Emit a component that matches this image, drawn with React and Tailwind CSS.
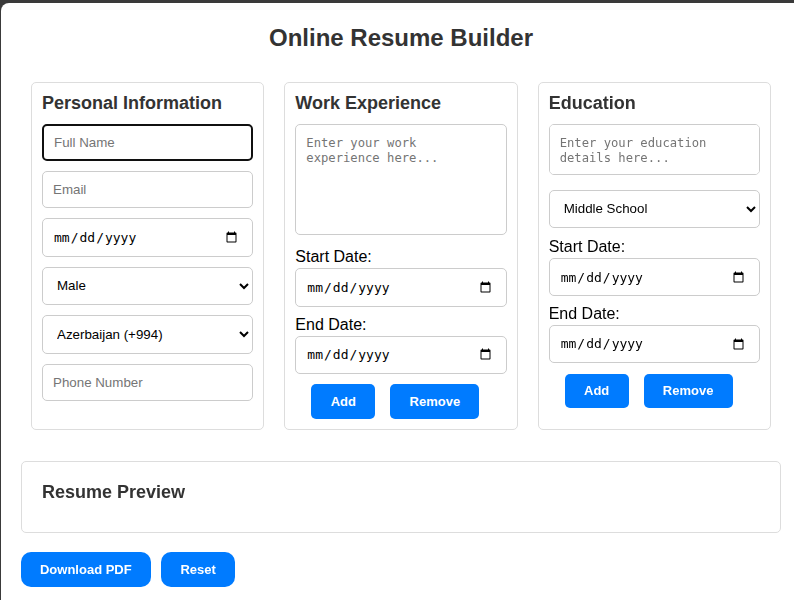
import React from "react";

const font = { fontFamily: "'Liberation Sans', Arial, sans-serif" };

function TextInput({ placeholder, focused }) {
  return (
    <input
      type="text"
      placeholder={placeholder}
      className={
        "block w-full h-[37.3px] px-[10px] text-[13.33px] leading-[15.3px] rounded-[5px] bg-white text-black placeholder:text-[#757575] outline-none mb-[10px] " +
        (focused ? "border-2 border-[#101010] px-[9px]" : "border border-[#cccccc]")
      }
    />
  );
}

function DateInput({ mb = "mb-[10px]" }) {
  return (
    <input
      type="date"
      className={
        "block w-full h-[38.4px] pl-[10px] pr-[12px] border border-[#cccccc] rounded-[5px] bg-white text-black text-[13px] font-['DejaVu_Sans_Mono',monospace] outline-none " +
        mb
      }
    />
  );
}

function Select({ children, value }) {
  return (
    <select
      defaultValue={value}
      className="block w-full h-[38.5px] px-[10px] border border-[#cccccc] rounded-[5px] bg-white text-black text-[13.33px] outline-none mb-[10px]"
    >
      {children}
    </select>
  );
}

function Label({ children }) {
  return (
    <div className="text-[16px] leading-[18.4px] text-black mb-[1.5px]">{children}</div>
  );
}

function SmallButtons() {
  return (
    <div className="flex gap-[15px] pl-[16px]">
      <button className="w-[64px] h-[34.7px] rounded-[5px] bg-[#007bff] text-white text-[13px] font-bold">
        Add
      </button>
      <button className="w-[89px] h-[34.7px] rounded-[5px] bg-[#007bff] text-white text-[13px] font-bold">
        Remove
      </button>
    </div>
  );
}

function Card({ title, children }) {
  return (
    <div className="flex-1 mx-[10px] border border-[#dddddd] rounded-[5px] p-[10px]">
      <h3 className="text-[18px] leading-[20.7px] font-bold text-[#333333] mb-[10px]">{title}</h3>
      {children}
    </div>
  );
}

export default function App() {
  return (
    <div className="w-[794px] h-[600px] overflow-hidden bg-[#3a3a3a]" style={font}>
      <div className="ml-[1px] mt-[3px] w-[800px] h-[620px] bg-white rounded-[8px] px-[20px] pt-[21px]">
        <h1 className="text-center text-[24px] leading-[27.6px] font-bold text-[#333333] mb-[30.4px]">
          Online Resume Builder
        </h1>
        <div className="flex items-stretch">
          <Card title="Personal Information">
            <TextInput placeholder="Full Name" focused />
            <TextInput placeholder="Email" />
            <DateInput />
            <Select value="Male">
              <option>Male</option>
              <option>Female</option>
            </Select>
            <Select value="az">
              <option value="az">Azerbaijan (+994)</option>
            </Select>
            <TextInput placeholder="Phone Number" />
          </Card>
          <Card title="Work Experience">
            <textarea
              placeholder="Enter your work experience here..."
              className="block w-full h-[111.3px] px-[10px] pt-[11px] pb-[10px] border border-[#cccccc] rounded-[5px] bg-white text-[12.2px] leading-[15px] font-['DejaVu_Sans_Mono',monospace] placeholder:text-[#757575] outline-none resize-none mb-[13.5px]"
            />
            <Label>Start Date:</Label>
            <DateInput mb="mb-[9px]" />
            <Label>End Date:</Label>
            <DateInput mb="mb-[10px]" />
            <SmallButtons />
          </Card>
          <Card title="Education">
            <textarea
              placeholder="Enter your education details here..."
              className="block w-full h-[51px] px-[10px] pt-[11px] pb-[10px] border border-[#cccccc] rounded-[5px] bg-white text-[12.2px] leading-[15px] font-['DejaVu_Sans_Mono',monospace] placeholder:text-[#757575] outline-none resize-none mb-[15px]"
            />
            <Select value="ms">
              <option value="hs">High School</option>
              <option value="ms">Middle School</option>
            </Select>
            <Label>Start Date:</Label>
            <DateInput mb="mb-[8.5px]" />
            <Label>End Date:</Label>
            <DateInput mb="mb-[10.3px]" />
            <SmallButtons />
          </Card>
        </div>
        <div className="mt-[31px] w-[760px] border border-[#dddddd] rounded-[5px] px-[20px] pt-[20px] pb-[20px]">
          <h3 className="text-[18px] leading-[20.7px] font-bold text-[#333333] mb-[10px]">Resume Preview</h3>
        </div>
        <div className="flex gap-[10.5px] mt-[19px]">
          <button className="w-[129.7px] h-[34.7px] rounded-[10px] bg-[#007bff] text-white text-[13px] font-bold">
            Download PDF
          </button>
          <button className="w-[74px] h-[34.7px] rounded-[10px] bg-[#007bff] text-white text-[13px] font-bold">
            Reset
          </button>
        </div>
      </div>
    </div>
  );
}
